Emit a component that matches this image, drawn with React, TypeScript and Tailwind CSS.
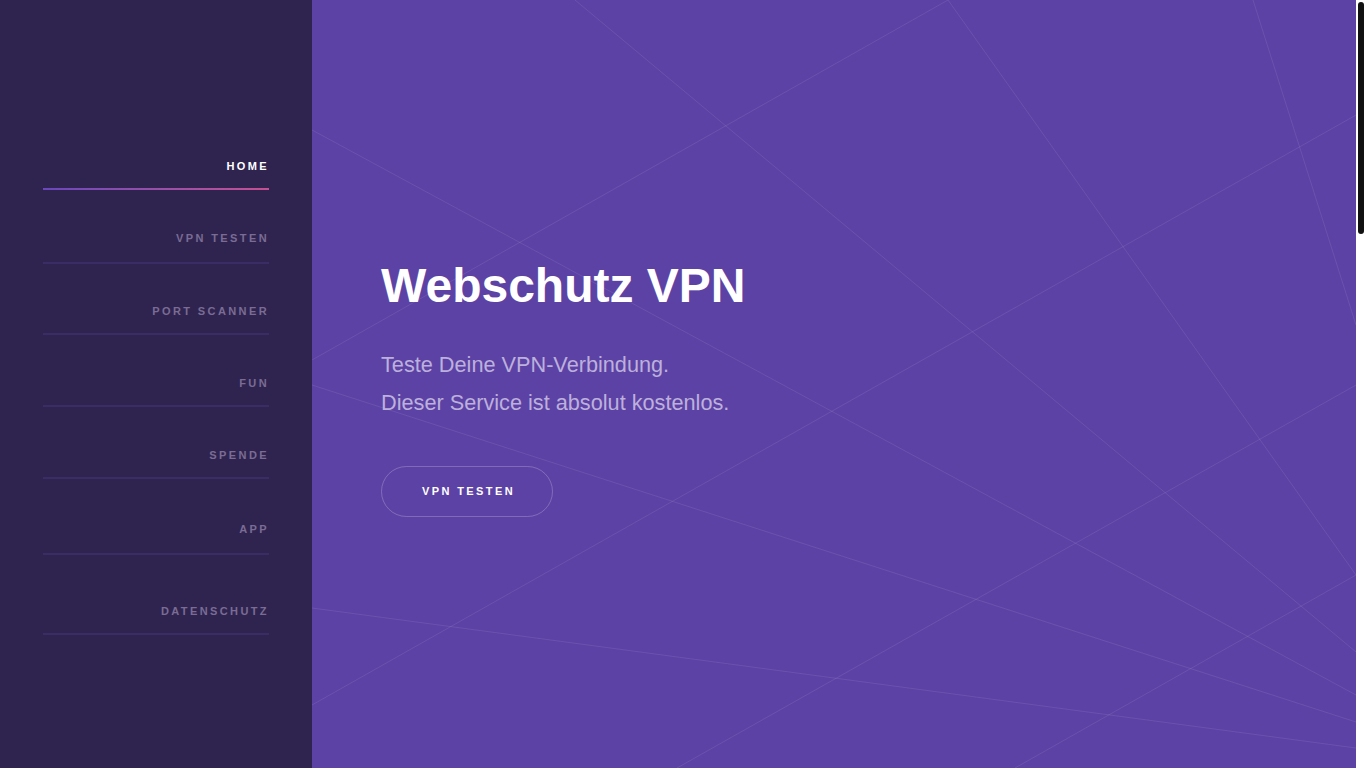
import React from "react";

const navItems = [
  { label: "HOME", active: true, cls: "pt-[161px] pb-[16px]" },
  { label: "VPN TESTEN", active: false, cls: "pt-[43px] pb-[18px]" },
  { label: "PORT SCANNER", active: false, cls: "pt-[42px] pb-[16px]" },
  { label: "FUN", active: false, cls: "pt-[43px] pb-[16px]" },
  { label: "SPENDE", active: false, cls: "pt-[43px] pb-[16px]" },
  { label: "APP", active: false, cls: "pt-[45px] pb-[18px]" },
  { label: "DATENSCHUTZ", active: false, cls: "pt-[51px] pb-[16px]" },
];

const lines: [number, number, number, number][] = [
  [263, 0, 1044, 652],
  [636, 0, 0, 360],
  [636, 0, 1044, 575],
  [1044, 115, 0, 705],
  [0, 130, 1044, 695],
  [0, 385, 1044, 722],
  [941, 0, 1044, 325],
  [1044, 385, 365, 768],
  [1044, 575, 703, 768],
  [0, 608, 1044, 748],
];

export default function App() {
  return (
    <div
      className="flex h-screen overflow-hidden bg-[#5d42a5]"
      style={{ fontFamily: '"Liberation Sans", Arial, sans-serif' }}
    >
      <aside className="h-full w-[312px] shrink-0 bg-[#2f2450] px-[43px]">
        <nav className="flex flex-col">
          {navItems.map((item) => (
            <a key={item.label} href="#" className={`block text-right ${item.cls}`}>
              <span
                className={`block text-[11px] leading-[11px] font-bold tracking-[2.4px] ${
                  item.active ? "text-white" : "text-[#7a6c94]"
                }`}
              >
                {item.label}
              </span>
            </a>
          )).reduce<React.ReactNode[]>((acc, el, i) => {
            acc.push(el);
            acc.push(
              navItems[i].active ? (
                <div
                  key={`l${i}`}
                  className="h-[2px] bg-gradient-to-r from-[#6a46bb] to-[#c64f92]"
                />
              ) : (
                <div key={`l${i}`} className="h-[2px] bg-[#3a2c64]" />
              )
            );
            return acc;
          }, [])}
        </nav>
      </aside>
      <main className="relative h-full w-[1044px] shrink-0 overflow-hidden bg-[#5d42a5]">
        <svg
          className="absolute left-0 top-0"
          width="1044"
          height="768"
          viewBox="0 0 1044 768"
        >
          {lines.map(([x1, y1, x2, y2], i) => (
            <line
              key={i}
              x1={x1}
              y1={y1}
              x2={x2}
              y2={y2}
              stroke="rgba(255,255,255,0.085)"
              strokeWidth="1"
            />
          ))}
        </svg>
        <div className="relative pl-[69px] pt-[262px]">
          <h1 className="text-[48px] leading-[48px] font-bold text-white">
            Webschutz VPN
          </h1>
          <p className="mt-[36px] text-[21.7px] leading-[38px] text-[#bcb0dc]">
            Teste Deine VPN-Verbindung.
            <br />
            Dieser Service ist absolut kostenlos.
          </p>
          <a
            href="#"
            className="mt-[44px] flex h-[51px] w-[172px] items-center justify-center rounded-full border border-[rgba(255,255,255,0.22)] pl-[3px] text-[11px] leading-[11px] font-bold tracking-[2.4px] text-white"
          >
            VPN TESTEN
          </a>
        </div>
      </main>
      <div className="h-full w-[10px] shrink-0 bg-white px-[2px] pt-[2px]">
        <div className="h-[232px] w-[6px] rounded-full bg-[#111111]" />
      </div>
    </div>
  );
}
